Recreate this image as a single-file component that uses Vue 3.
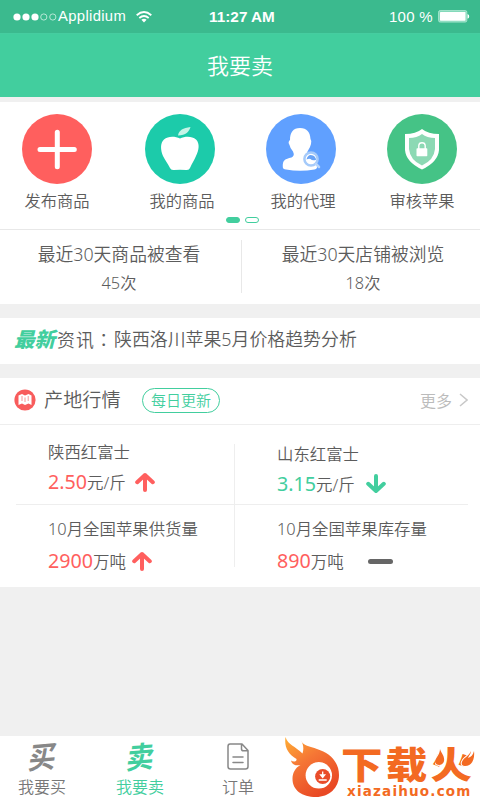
<script setup>
const shortcuts = [
  { id: 'publish', label: '发布商品' },
  { id: 'goods', label: '我的商品' },
  { id: 'agent', label: '我的代理' },
  { id: 'audit', label: '审核苹果' },
]
const stats = [
  { title: '最近30天商品被查看', value: '45次' },
  { title: '最近30天店铺被浏览', value: '18次' },
]
const quotes = [
  { name: '陕西红富士', value: '2.50', unit: '元/斤', trend: 'up', tone: 'red' },
  { name: '山东红富士', value: '3.15', unit: '元/斤', trend: 'down', tone: 'green' },
  { name: '10月全国苹果供货量', value: '2900', unit: '万吨', trend: 'up', tone: 'red' },
  { name: '10月全国苹果库存量', value: '890', unit: '万吨', trend: 'flat', tone: 'red' },
]
</script>

<template>
  <div class="screen">
    <div class="status">
      <div class="carrier">
        <svg class="signal" width="44" height="8" viewBox="0 0 44 8">
          <g fill="#fff"><circle cx="4" cy="4" r="3.6" /><circle cx="13" cy="4" r="3.6" /><circle cx="22" cy="4" r="3.6" /></g>
          <g fill="none" stroke="#d5f3e8" stroke-width=".8"><circle cx="30.8" cy="4" r="3.1" /><circle cx="39.8" cy="4" r="3.1" /></g>
        </svg>
        <span class="carrier-name">Applidium</span>
        <svg class="wifi" width="16" height="12" viewBox="0 0 16 12" fill="none" stroke="#fff" stroke-width="1.8">
          <path d="M.7 4.2Q8-2.2 15.3 4.2M3.3 7Q8 3 12.7 7" />
          <path d="M5.4 8.8Q8 6.8 10.6 8.8L8 11.5Z" fill="#fff" stroke="none" />
        </svg>
      </div>
      <div class="clock">11:27 AM</div>
      <div class="power">
        <span>100 %</span>
        <svg width="32" height="13" viewBox="0 0 32 13">
          <rect x=".6" y=".6" width="28.2" height="11.4" rx="1.5" fill="#80d8b8" stroke="#a5e5ce" />
          <rect x="2" y="2" width="25.5" height="8.7" rx=".6" fill="#fff" />
          <path d="M29.5 4Q31.5 5 31.2 6.4Q31.2 8 29.5 8.8Z" fill="#fff" />
        </svg>
      </div>
    </div>
    <header class="title">我要卖</header>

    <section class="overview">
      <nav class="shortcuts">
        <div v-for="s in shortcuts" :key="s.id" class="shortcut">
          <svg width="70" height="70" viewBox="0 0 70 70">
            <template v-if="s.id === 'publish'">
              <circle cx="35" cy="35" r="35" fill="#ff5f5e" />
              <path d="M35.3 18.3V52.700M18 35.400H52.300" stroke="#fff" stroke-width="5" stroke-linecap="round" />
            </template>
            <template v-else-if="s.id === 'goods'">
              <circle cx="35" cy="35" r="35" fill="#1ccbaa" />
              <path d="M35 24.500C30 22.300 23 22 19 25.500C15 29 15.500 36 18 42C20.500 47 22.500 49 25 54Q26 56.500 29 56Q35 55.300 41 56Q44 56.500 45 54C47 49 49 47 51 42C54 36 55 29.500 51 25.500C47 22 40 22.300 35 24.500Z" fill="#fff" />
              <path d="M33 21.500C34 16 38 14 45.500 13C44 18 41 21 33 21.500Z" fill="#c6f4e7" />
            </template>
            <template v-else-if="s.id === 'agent'">
              <circle cx="35" cy="35" r="35" fill="#60a0ff" />
              <path d="M34 14C27 14 24 18.500 24 26Q21.500 28 23.500 31Q24 34 27 37.500Q29 42 25.500 43.500C19 45 16.500 46 16.800 53Q16.800 55 20 55.500Q34 58 48.500 55.500Q52 55 51 50Q50.500 45 43 43.500Q39 42 41.500 37.500Q44.500 33 45 30Q46 27 44.500 25C44 18 41 14 34 14Z" fill="#fff" />
              <circle cx="45" cy="45" r="6.600" fill="#fff" stroke="#a5cafa" stroke-width="2.500" />
              <path d="M40.500 45.500Q42 39.500 47 41.500Q50 43 50 46Q46 47 44.500 45Q42.500 44.500 40.500 45.500Z" fill="#69a3f6" />
              <path d="M50 50L53 53" stroke="#b8d5fc" stroke-width="2.500" stroke-linecap="round" />
            </template>
            <template v-else>
              <circle cx="35" cy="35" r="35" fill="#45c386" />
              <path d="M35 15Q41 20 52 20V36Q51 48 35 55.500Q19 48 18 36V20Q29 20 35 15Z" fill="#fff" />
              <path d="M35 20Q40 24 48 24V35Q47 46 35 51.500Q23 46 22 35V24Q30 24 35 20Z" fill="#8cd9b4" />
              <path d="M31.800 35V31.500Q32 28.800 35 28.800Q38 28.800 38.200 31.500V35" fill="none" stroke="#fff" stroke-width="1.400" />
              <rect x="29.500" y="34.200" width="10.800" height="8" rx=".7" fill="#fff" />
            </template>
          </svg>
          <span class="shortcut-label">{{ s.label }}</span>
        </div>
      </nav>
      <div class="pager"><i class="on"></i><i></i></div>
      <div class="stats">
        <div v-for="s in stats" :key="s.title" class="stat">
          <div class="stat-title">{{ s.title }}</div>
          <div class="stat-value">{{ s.value }}</div>
        </div>
      </div>
    </section>

    <section class="news">
      <b class="hot">最新</b><span class="news-kind">资讯<span class="colon">：</span></span><span>陕西洛川苹果5月价格趋势分析</span>
    </section>

    <section class="market">
      <div class="market-head">
        <svg width="22" height="22" viewBox="0 0 22 22">
          <circle cx="11" cy="11" r="10.600" fill="#f85c5c" />
          <path d="M4.500 6.500L8 5L11 6.500L14.500 5L17.500 6.500V16L14.500 14.500L11 16L8 14.500L4.500 16Z" fill="#fff" />
          <path d="M8 7V12M11 8.500V13M14.200 7V12" stroke="#f98b8b" stroke-width=".9" />
        </svg>
        <h2>产地行情</h2>
        <span class="pill">每日更新</span>
        <span class="more">更多</span>
        <svg class="chevron" width="9" height="14" viewBox="0 0 9 14"><path d="M1 1L8 7L1 13" fill="none" stroke="#c8c8c8" stroke-width="1.500" /></svg>
      </div>
      <div class="quotes">
        <div v-for="q in quotes" :key="q.name" class="quote">
          <div class="quote-name">{{ q.name }}</div>
          <div class="quote-row">
            <span class="num" :class="q.tone">{{ q.value }}</span><span class="unit">{{ q.unit }}</span>
            <svg v-if="q.trend !== 'flat'" class="arrow" :class="[q.trend, q.tone]" width="20" height="20" viewBox="0 0 20 20">
              <path d="M10 18V3M2.200 10.200L10 3L17.800 10.200" fill="none" stroke="currentColor" stroke-width="4" stroke-linecap="round" stroke-linejoin="round" />
            </svg>
            <i v-else class="flat"></i>
          </div>
        </div>
      </div>
    </section>

    <footer class="tabs">
      <div class="tab">
        <span class="brush">买</span>
        <span>我要买</span>
      </div>
      <div class="tab active">
        <span class="brush sell">卖</span>
        <span>我要卖</span>
      </div>
      <div class="tab">
        <svg width="22" height="27" viewBox="0 0 22 27" fill="none" stroke="#888" stroke-width="1.500" stroke-linejoin="round" stroke-linecap="round">
          <path d="M3 1H15L21 7.500V23.500Q21 26 18.500 26H3.500Q1 26 1 23.500V3.500Q1 1 3 1ZM14.500 1V6Q14.500 7.800 16.500 7.800H21M6 14H16M6 19.500H16" />
        </svg>
        <span>订单</span>
      </div>
      <div class="brand">
        <svg class="flame" width="57" height="62" viewBox="0 0 57 62">
          <defs>
            <linearGradient id="fire" x1="0" y1="0" x2=".6" y2="1">
              <stop offset="0" stop-color="#ffae35" /><stop offset=".45" stop-color="#f57635" /><stop offset="1" stop-color="#e94824" />
            </linearGradient>
          </defs>
          <path fill="url(#fire)" d="M1.500 0C4 8 11 9 18.500 16.500C20 12 19.500 7 16.500 3C19 9 26 9 33 12C46 16 55 25 55 38C55 51 45 60 32 60C18 60 8.500 53 8.500 42C8.500 36 11 31 16.500 28C12 29 8 28 7 23.500C9 25 13 25 12.500 22C4 17 0 10 1.500 0Z" />
          <circle cx="34.800" cy="38.300" r="13.200" fill="#fff" />
          <circle cx="38.700" cy="39.500" r="7.600" fill="#e94c2a" />
          <path d="M38.700 34.500V39M36.700 38L38.700 40.500L40.700 38ZM34.700 43H42.700" stroke="#fff" stroke-width="1.300" fill="none" />
        </svg>
        <div class="brand-text">
          <div class="brand-name">
            <span>下载火</span>
            <svg class="sparks" width="42" height="20" viewBox="0 0 42 20">
              <path stroke="#fff" stroke-width="2" paint-order="stroke" fill="#f36a22" d="M5 1C6 5 10 8 9 13C8 18 1 18 0 14C0 10 5 7 5 1ZM36 3C36 6 34 7 33 10C36 9 38 7 39 3C40 11 37 18 30 18C26 18 26 15 28 12C30 9 34 8 36 3Z" />
            </svg>
          </div>
          <div class="brand-url">xiazaihuo.com</div>
        </div>
      </div>
    </footer>
  </div>
</template>

<style>
body { margin: 0; background: #f0f0f0; }
</style>

<style scoped>
.screen { width: 480px; height: 800px; overflow: hidden; background: #f0f0f0; color: #5c5c5c; display: flex; flex-direction: column; font-family: "Noto Sans", "Noto Sans CJK SC", sans-serif; font-weight: 350; }
.screen * { box-sizing: border-box; }
svg { display: block; flex: none; }
.status { height: 33px; flex: none; background: #3bba8e; color: #fff; display: grid; grid-template-columns: 200px 84px 196px; align-items: center; font-family: "Liberation Sans", sans-serif; font-weight: 400; font-size: 15px; line-height: 33px; }
.carrier { display: flex; align-items: center; padding-left: 13px; }
.carrier-name { width: 69px; margin-left: 1px; font-size: 14.800px; letter-spacing: .35px; white-space: nowrap; }
.wifi { margin-left: 9px; }
.clock { font-weight: 700; text-align: center; font-size: 15.300px; white-space: nowrap; }
.power { display: flex; align-items: center; justify-content: flex-end; gap: 5px; padding-right: 10px; font-size: 15px; letter-spacing: .3px; }
.title { height: 64px; flex: none; background: #42ce9e; color: #fff; text-align: center; font-size: 22px; line-height: 62px; border-top: 1px solid #46cda0; }
.overview { margin-top: 5px; height: 202px; flex: none; background: #fff; }
.shortcuts { display: grid; grid-template-columns: 123px 121px 121px 70px; padding: 12px 0 0 22px; height: 115px; }
.shortcut { width: 70px; display: flex; flex-direction: column; align-items: center; }
.shortcut-label { white-space: nowrap; font-size: 16.300px; line-height: 24px; margin-top: 5px; }
.shortcut:nth-child(2) .shortcut-label, .shortcut:nth-child(3) .shortcut-label { padding-left: 4px; }
.pager { height: 12px; display: flex; justify-content: center; gap: 5px; padding-left: 5px; }
.pager i { width: 14px; height: 6px; border: 1px solid #42ce9e; border-radius: 3px; }
.pager .on { background: #42ce9e; }
.stats { height: 75px; border-top: 1px solid #e8e8e8; display: grid; grid-template-columns: 241px 239px; padding-top: 10px; text-align: center; }
.stat { height: 53px; }
.stat:first-child { padding-right: 3px; }
.stat:last-child { border-left: 1px solid #e8e8e8; padding-left: 4px; }
.stat-title { font-size: 17.800px; line-height: 28px; }
.stat-value { font-size: 16.300px; line-height: 24px; margin-top: 3px; }
.news { margin-top: 14px; height: 46px; flex: none; background: #fff; padding-left: 14px; display: flex; font-size: 17.900px; line-height: 43px; white-space: nowrap; }
.hot { width: 43px; color: #42ce9e; font-size: 20.500px; font-weight: 900; font-style: italic; }
.news-kind { width: 57px; letter-spacing: 1px; }
.colon { font-family: "Noto Sans CJK TC", sans-serif; }
.market { margin-top: 14px; height: 209px; flex: none; background: #fff; }
.market-head { height: 47px; border-bottom: 1px solid #eee; display: flex; align-items: center; padding: 0 12px 2px 14px; }
h2 { margin: 0 0 0 8px; width: 98px; font-size: 19.200px; line-height: 28px; font-weight: 350; }
.pill { width: 78px; height: 25px; border: 1.500px solid #42ce9e; border-radius: 13px; color: #42ce9e; font-size: 15px; line-height: 22px; text-align: center; }
.more { margin-left: auto; color: #bbb; font-size: 16px; }
.chevron { margin-left: 7px; }
.quotes { display: grid; grid-template-columns: 219px 233px; grid-template-rows: 61px 62px; width: 452px; margin: 19px 0 0 16px; }
.quote { padding-left: 32px; border-right: 1px solid #eee; }
.quote:nth-child(even) { border-right: 0; padding-left: 42px; }
.quote:nth-child(-n+2) { border-bottom: 1px solid #eee; }
.quote-name { font-size: 16.400px; line-height: 24px; margin-top: -4px; white-space: nowrap; }
.quote:nth-child(2) .quote-name { margin-top: -2px; }
.quote:nth-child(n+3) .quote-name { margin-top: 12px; }
.quote-row { display: flex; align-items: center; height: 26px; margin-top: 5px; line-height: 26px; }
.quote:nth-child(n+3) .quote-row { margin-top: 7px; }
.num { font-size: 19.700px; font-weight: 400; }
.unit { font-size: 16.500px; padding-top: 2px; }
.red { color: #ff5f5e; }
.green { color: #42ce9e; }
.arrow { margin-left: 9px; }
.quote:nth-child(3) .arrow { margin-left: 6px; }
.down { transform: rotate(180deg); margin-left: 11px; }
.flat { width: 25px; height: 5px; border-radius: 3px; background: #666; margin-left: 24px; }
.tabs { margin-top: auto; height: 64px; flex: none; background: #fff; display: grid; grid-template-columns: 91px 98px 95px 196px; color: #777; font-size: 16px; line-height: 22px; }
.tab { display: flex; flex-direction: column; align-items: center; justify-content: space-between; padding: 7px 0 2px; }
.tab:first-child { padding-right: 7px; }
.tab:nth-child(3) { padding-left: 3px; }
.tab.active { color: #42ce9e; }
.brush { font-size: 27px; line-height: 28px; font-weight: 700; color: #888; transform: skewX(-12deg) rotate(-5deg) scaleY(1.12); }
.brush.sell { color: #42ce9e; }
.brand { display: flex; padding-top: 1px; color: #f36a22; white-space: nowrap; }
.brand-name { position: relative; height: 46px; padding-top: 9px; }
.brand-name span { display: block; width: 120px; font-size: 37px; line-height: 37px; font-weight: 900; letter-spacing: 3px; transform: scaleX(1.12); transform-origin: 0 0; }
.sparks { position: absolute; left: 94px; top: 11px; }
.brand-text { width: 139px; }
.brand-url { font-family: "DejaVu Sans", sans-serif; font-size: 13.500px; line-height: 16px; font-weight: 700; padding-left: 6px; letter-spacing: 1.200px; }
</style>
